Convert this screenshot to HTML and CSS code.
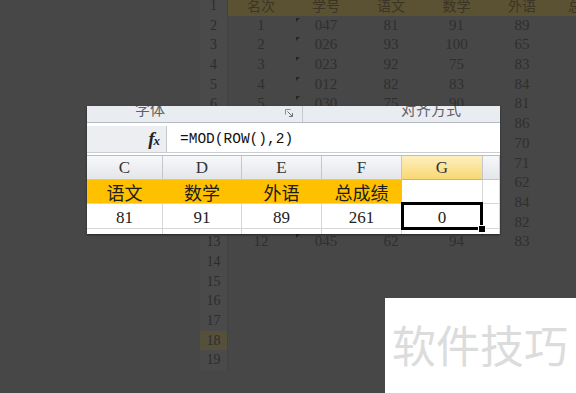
FILE: index.html
```html
<!DOCTYPE html>
<html lang="zh-CN">
<head>
  <meta charset="UTF-8">
  <meta name="viewport" content="width=device-width, initial-scale=1.0">
  <title>MOD ROW</title>
  <link rel="stylesheet" href="styles.css">
</head>
<body>
  <div class="sheet">
    <div class="row head"><div class="num">1</div><div>名次</div><div>学号</div><div>语文</div><div>数学</div><div>外语</div><div class="left">总成绩</div></div>
    <div class="row"><div class="num">2</div><div>1</div><div class="txt">047</div><div>81</div><div>91</div><div>89</div></div>
    <div class="row"><div class="num">3</div><div>2</div><div class="txt">026</div><div>93</div><div>100</div><div>65</div></div>
    <div class="row"><div class="num">4</div><div>3</div><div class="txt">023</div><div>92</div><div>75</div><div>83</div></div>
    <div class="row"><div class="num">5</div><div>4</div><div class="txt">012</div><div>82</div><div>83</div><div>84</div></div>
    <div class="row"><div class="num">6</div><div>5</div><div class="txt">030</div><div>75</div><div>90</div><div>81</div></div>
    <div class="row"><div class="num">7</div><div>6</div><div class="txt">031</div><div>88</div><div>72</div><div>86</div></div>
    <div class="row"><div class="num">8</div><div>7</div><div class="txt">018</div><div>79</div><div>85</div><div>70</div></div>
    <div class="row"><div class="num">9</div><div>8</div><div class="txt">040</div><div>84</div><div>78</div><div>71</div></div>
    <div class="row"><div class="num">10</div><div>9</div><div class="txt">022</div><div>80</div><div>82</div><div>62</div></div>
    <div class="row"><div class="num">11</div><div>10</div><div class="txt">009</div><div>71</div><div>88</div><div>84</div></div>
    <div class="row"><div class="num">12</div><div>11</div><div class="txt">036</div><div>77</div><div>80</div><div>82</div></div>
    <div class="row"><div class="num">13</div><div>12</div><div class="txt">045</div><div>62</div><div>94</div><div>83</div></div>
    <div class="row"><div class="num">14</div></div>
    <div class="row"><div class="num">15</div></div>
    <div class="row"><div class="num">16</div></div>
    <div class="row"><div class="num">17</div></div>
    <div class="row"><div class="num current">18</div></div>
    <div class="row"><div class="num">19</div></div>
  </div>

  <div class="panel">
    <div class="ribbon">
      <div class="group first">
        <span>字体</span>
        <svg class="launcher" width="8" height="8" viewBox="0 0 8 8">
          <path d="M0.5 0.5h5M0.5 0.5v5" stroke="#8a8f96" fill="none"/>
          <path d="M2.5 2.5l4.5 4.5M7.5 4v3.5h-3.5" stroke="#6b7078" fill="none"/>
        </svg>
      </div>
      <div class="group second"><span>对齐方式</span></div>
    </div>
    <div class="formula">
      <div class="fx-box"><span class="fx">f<span class="x">x</span></span></div>
      <div class="input">=MOD(ROW(),2)</div>
    </div>
    <div class="grid">
      <div class="colhead">C</div>
      <div class="colhead">D</div>
      <div class="colhead">E</div>
      <div class="colhead">F</div>
      <div class="colhead active">G</div>
      <div class="colhead"></div>

      <div class="cell orange">语文</div>
      <div class="cell orange">数学</div>
      <div class="cell orange">外语</div>
      <div class="cell orange">总成绩</div>
      <div class="cell"></div>
      <div class="cell"></div>

      <div class="cell num-cell">81</div>
      <div class="cell num-cell">91</div>
      <div class="cell num-cell">89</div>
      <div class="cell num-cell">261</div>
      <div class="cell num-cell sel">0</div>
      <div class="cell"></div>

      <div class="cell"></div>
      <div class="cell"></div>
      <div class="cell"></div>
      <div class="cell"></div>
      <div class="cell"></div>
      <div class="cell"></div>
    </div>
  </div>

  <div class="watermark">软件技巧</div>
</body>
</html>
```

FILE: styles.css
```css
body {
  margin: 0;
  padding: 0;
  width: 576px;
  height: 393px;
  overflow: hidden;
  background-color: #474747;
  position: relative;
}

/* dimmed worksheet behind the callout */
.sheet {
  margin-left: 200px;
  margin-top: -4px;
  font-family: "Liberation Serif", serif;
  font-size: 15px;
  color: #2f2f2f;
}
.row {
  display: grid;
  grid-template-columns: 28px 66px 64px 66px 65px 66px 65px;
  height: 19.7px;
}
.row div {
  text-align: center;
  line-height: 19.7px;
  white-space: nowrap;
}
.row .num {
  background-color: #4a4a4a;
  border-right: 1px solid #424242;
  font-size: 14px;
  color: #2c2c2c;
}
.row .num.current {
  background-color: #55503a;
}
.head div {
  background-color: #5a5233;
  color: #3a3525;
  font-family: "Noto Sans CJK SC", sans-serif;
  font-size: 14px;
}
.head .num {
  background-color: #4a4a4a;
  font-family: "Liberation Serif", serif;
}
.head .left {
  text-align: left;
  padding-left: 13px;
}
.txt {
  position: relative;
}
.txt::before {
  content: "";
  position: absolute;
  left: 2px;
  top: 2px;
  border-top: 4px solid #262626;
  border-right: 4px solid transparent;
}

/* zoomed callout */
.panel {
  position: absolute;
  left: 87px;
  top: 106px;
  width: 413px;
  height: 128px;
  background-color: #fff;
  overflow: hidden;
  box-shadow: 0 1px 2px rgba(0, 0, 0, 0.5);
}
.ribbon {
  display: grid;
  grid-template-columns: 216px 1fr;
  height: 16px;
  background-color: #e9edf2;
  border-bottom: 1px solid #b4bac2;
  overflow: hidden;
  font-family: "Noto Sans CJK SC", sans-serif;
  font-size: 15px;
  color: #5f6166;
}
.group {
  display: flex;
  justify-content: space-between;
  align-items: flex-start;
}
.group span {
  display: block;
  line-height: 16px;
  margin-top: -5px;
}
.group.first {
  padding-left: 48px;
  padding-right: 9px;
  border-right: 1px solid #c6cbd2;
}
.group.second {
  padding-left: 98px;
}
.launcher {
  margin-top: 3px;
}
.formula {
  display: flex;
  height: 26px;
  margin-top: 3px;
  border-bottom: 1px solid #c9ced4;
}
.fx-box {
  width: 80px;
  background-color: #eceef1;
  border-right: 1px solid #c3c8ce;
  display: flex;
  justify-content: flex-end;
  align-items: center;
  padding-right: 6px;
  box-sizing: border-box;
}
.fx {
  font-family: "Liberation Serif", serif;
  font-style: italic;
  font-weight: bold;
  font-size: 19px;
  color: #222;
}
.fx .x {
  font-size: 13px;
  margin-left: -1px;
}
.input {
  flex: 1;
  padding-left: 13px;
  font-family: "Liberation Mono", monospace;
  font-size: 14.5px;
  line-height: 26px;
  color: #111;
}
.grid {
  display: grid;
  grid-template-columns: 76px 79px 80px 80px 81px 1fr;
  grid-template-rows: 24px 24px 25px 10px;
  margin-top: 2px;
  border-top: 1px solid #b7bdc5;
  font-family: "Liberation Serif", serif;
  font-size: 17px;
  color: #222;
}
.colhead {
  background: linear-gradient(#f7f8fa, #e3e6ea);
  border-right: 1px solid #c3c7cd;
  border-bottom: 1px solid #c3c7cd;
  text-align: center;
  line-height: 24px;
  color: #333;
}
.colhead.active {
  background: linear-gradient(#fdf0bf, #f9d772);
  border-bottom: 1px solid #e2b43a;
}
.cell {
  border-right: 1px solid #d6d6d6;
  border-bottom: 1px solid #d6d6d6;
  text-align: center;
  line-height: 24px;
}
.cell.num-cell {
  line-height: 28px;
}
.cell.orange {
  background-color: #ffc000;
  border-right-color: #ffc000;
  font-family: "Noto Sans CJK SC", sans-serif;
  font-size: 18px;
  line-height: 25px;
  color: #1c1c1c;
}
.cell.sel {
  position: relative;
}
.cell.sel::after {
  content: "";
  position: absolute;
  left: -1px;
  top: -2px;
  right: -1px;
  bottom: -2px;
  border: 3px solid #000;
}
.cell.sel::before {
  content: "";
  position: absolute;
  right: -4px;
  bottom: -5px;
  width: 6px;
  height: 6px;
  background-color: #000;
  border: 1px solid #fff;
  z-index: 1;
}

.watermark {
  position: absolute;
  left: 385px;
  top: 298px;
  width: 191px;
  height: 95px;
  background-color: #fff;
  display: flex;
  align-items: center;
  padding-left: 7px;
  box-sizing: border-box;
  padding-bottom: 4px;
  font-family: "Noto Sans CJK SC", sans-serif;
  font-size: 44px;
  color: #dcdcdc;
  white-space: nowrap;
}
```
